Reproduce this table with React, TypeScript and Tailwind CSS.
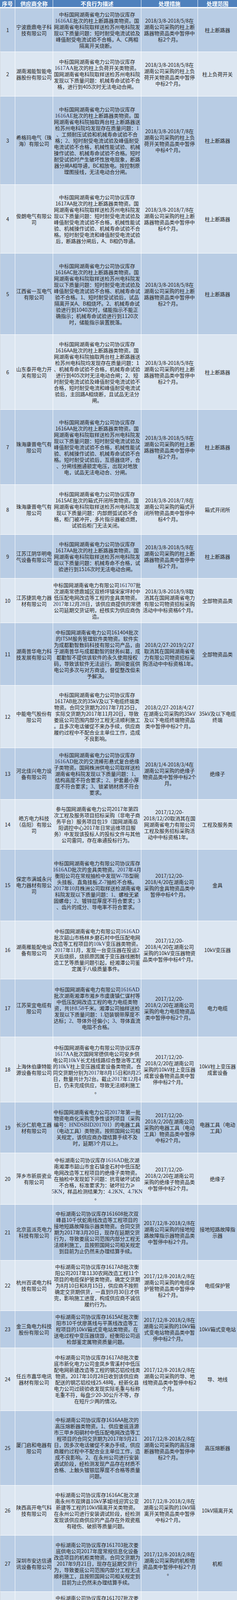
type Row = {
  h: number;
  name: string[];
  desc: string[];
  measure: string[];
  scope: string[];
};

// {...} marks a run set in the serif face, as in the source sheet
const rows: Row[] = [
  {
    h: 112,
    name: ["宁波鹿鼎电子科", "技有限公司"],
    desc: ["中标国网湖南省电力公司协议库存", "{1616AE}批次的柱上断路器类物资。国", "网湖南省电科院取样送检苏州电科院发", "现以下质量问题：短时耐受电流试验及", "峰值耐受电流试验不合格，A、C两相", "隔离开关烧断。"],
    measure: ["2018/3/8-2018/5/8在", "湖南公司采购的柱上断", "路器物资品类中暂停中", "标2个月。"],
    scope: ["柱上断路器"],
  },
  {
    h: 114,
    name: ["湖南湘能智能电", "器股份有限公司"],
    desc: ["中标国网湖南省电力公司协议库存", "{1617AA}批次的柱上负荷开关类物资。", "国网湖南省电科院取样送检苏州电科院", "发现以下质量问题：机械寿命试验不合", "格，进行到405次时无法电动合闸。"],
    measure: ["2018/3/8-2018/5/8在", "湖南公司采购的柱上负", "荷开关物资品类中暂停", "中标2个月。"],
    scope: ["柱上负荷开关"],
  },
  {
    h: 226,
    name: ["希格玛电气（珠", "海）有限公司"],
    desc: ["中标国网湖南省电力公司协议库存", "{1616AE}批次的柱上断路器类物资。国", "网湖南省电科院抽取两台柱上断路器送", "检苏州电科院均发现存在质量问题：{1}", "、工频耐压试验和机械寿命试验不合", "格；{2}、短时耐受电流试验及峰值耐受", "电流试验不合格，机械性能试验、机械", "操作试验、机械寿命试验不合格。短时", "耐受试验时产生破坏性放电现象，断路", "器分闸A相导通，BC相放电。按控制原", "理图接线，无法电动合分闸。"],
    measure: ["2018/3/8-2018/7/8在", "湖南公司采购的柱上负", "荷开关物资品类中暂停", "中标4个月。"],
    scope: ["柱上断路器"],
  },
  {
    h: 176,
    name: ["俊朗电气有限公", "司"],
    desc: ["中标国网湖南省电力公司协议库存", "1617AA批次的柱上断路器类物资。国", "网湖南省电科院取样送检苏州电科院发", "现以下质量问题：短时耐受电流试验及", "峰值耐受电流试验不合格，机械性能试", "验、机械操作试验、机械寿命试验不合", "格。短时耐受电流和峰值耐受电流试验", "后，断路器分闸后，A、B相仍导通。"],
    measure: ["2018/3/8-2018/7/8在", "湖南公司采购的柱上断", "路器物资品类中暂停中", "标4个月。"],
    scope: ["柱上断路器"],
  },
  {
    h: 208,
    name: ["江西省一互电气", "有限公司"],
    desc: ["中标国网湖南省电力公司协议库存", "1616AC批次的柱上断路器类物资。国", "网湖南省电科院取样送检苏州电科院发", "现以下质量问题：短时耐受电流试验及", "峰值耐受电流试验不合格、机械寿命试", "验不合格。1、短时耐受试验后，试品", "隔离开关A、B相烧坏。2、机械寿命试", "验进行到1040次时，储能指示不能正", "确指示；机械寿命试验进行到1120次", "时，储能指示装置脱落。"],
    measure: ["2018/3/8-2018/5/8在", "湖南公司采购的柱上断", "路器物资品类中暂停中", "标2个月。"],
    scope: ["柱上断路器"],
  },
  {
    h: 192,
    name: ["山东泰开电力开", "关有限公司"],
    desc: ["中标国网湖南省电力公司协议库存", "1616AA批次的柱上断路器类物资。国", "网湖南省电科院抽取两台柱上断路器送", "检苏州电科院均发现存在质量问题：1", "、机械寿命试验不合格，机械寿命试验", "进行到405次时无法电动合闸；2、短", "时耐受电流试验及峰值耐受电流试验不", "合格，短时耐受电流和峰值耐受电流试", "验后，主回路A相烧断，且试品无法分", "闸。"],
    measure: ["2018/3/8-2018/5/8在", "湖南公司采购的柱上断", "路器物资品类中暂停中", "标2个月。"],
    scope: ["柱上断路器"],
  },
  {
    h: 192,
    name: ["珠海康晋电气有", "限公司"],
    desc: ["中标国网湖南省电力公司协议库存", "1616AA批次的柱上断路器类物资。国", "网湖南省电科院取样送检苏州电科院发", "现以下质量问题：短时耐受电流试验及", "峰值耐受电流试验不合格，机械性能试", "验、机械操作试验、机械寿命试验不合", "格。短时耐受试验后，互感器烧坏，合", "、分闸线圈通额定电压，出现对地放", "电，试品无法电动合、分闸。"],
    measure: ["2018/3/8-2018/5/8在", "湖南公司采购的柱上断", "路器物资品类中暂停中", "标2个月。"],
    scope: ["柱上断路器"],
  },
  {
    h: 128,
    name: ["珠海康晋电气有", "限公司"],
    desc: ["中标国网湖南省电力公司协议库存", "1615AE批次的箱式开闭所类物资。国", "网湖南省电科院取样送检苏州电科院发", "现以下质量问题：内部燃弧试验不合", "格，柜门被冲开，多片指示器被点燃，", "试验后柜门无法关闭。"],
    measure: ["2018/3/8-2018/7/8在", "湖南公司采购的箱式开", "闭所物资品类中暂停中", "标4个月。"],
    scope: ["箱式开闭所"],
  },
  {
    h: 112,
    name: ["江苏江阴华明电", "气设备有限公司"],
    desc: ["中标国网湖南省电力公司协议库存", "1617AA批次的柱上断路器类物资。国", "网湖南省电科院取样送检苏州电科院发", "现以下质量问题：机械寿命不合格，试", "验进行到1516次时无法电动合闸。"],
    measure: ["2018/3/8-2018/5/8在", "湖南公司采购的柱上断", "路器物资品类中暂停中", "标2个月。"],
    scope: ["柱上断路器"],
  },
  {
    h: 114,
    name: ["江苏捷凯电力器", "材有限公司"],
    desc: ["中标国网湖南省电力有限公司{161707}批", "次湖南常德鼎城区双桥坪镇宋家坪村中", "低压配电网改造等工程的金具类物资。", "{2017}年{12}月{28}日，该供应商提供的常德", "公司延期交货证明，经核实为供应商伪", "造。"],
    measure: ["2018/3/8-2018/9/8取", "消其在国网湖南省电力", "有限公司物资招标采购", "活动中中标资格6个月。"],
    scope: ["全部物资品类"],
  },
  {
    h: 160,
    name: ["湖南普华电力科", "技发展有限公司"],
    desc: ["中标国网湖南省电力公司161404批次", "的ITSM服务管理软件类物资。软件实", "为成都勤智数码科技有限公司产品，由", "于湖南普华与成都勤智的财务纠葛，成", "都勤智不提供该软件的永久使用授权", "码，导致该软件无法运行。期间娄底供", "电公司多次与对方商谈，督促整改但未", "予解决。"],
    measure: ["2018/2/27-2019/2/27", "取消其在国网湖南省电", "力有限公司物资招标采", "购活动中中标资格1年。"],
    scope: ["全部物资品类"],
  },
  {
    h: 160,
    name: ["中能电气股份有", "限公司"],
    desc: ["中标国网湖南省电力公司协议库存", "1617AB批次的35kV及以下电缆终端类", "物资。合同交货期为2017年7月25日，", "实际交货期为2017年11月20日，导致", "娄底公司范围内部分工程无法顺利施工", "。且多次电话催促不来办手续，供应商", "履约过程中不配合业主单位工作，造成", "不良影响。"],
    measure: ["2018/2/27-2018/4/27", "在湖南公司采购的35kV", "及以下电缆终端物资品", "类中暂停中标2个月。"],
    scope: ["35kV及以下电缆", "终端"],
  },
  {
    h: 132,
    name: ["河北佳兴电力设", "备有限公司"],
    desc: ["中标国网湖南省电力公司协议库存", "{1616AD}批次的交流棒形悬式复合绝缘", "子类物资。国网株洲供电公司取样送检", "湖南省电科院发现以下质量问题：{1}、", "结构高度不符合要求；{2}、护套最小厚", "度不符合要求；{3}、锁紧销材质不符合", "要求。"],
    measure: ["2018/1/4-2018/3/4在", "湖南公司采购的绝缘子", "物资品类中暂停中标2个", "月。"],
    scope: ["绝缘子"],
  },
  {
    h: 128,
    name: ["皓方电力科技", "（岳阳）有限公", "司"],
    desc: ["参与国网湖南省电力公司2017年第四", "次工程及服务项目招标采购（非电子商", "务平台）服务项目包19（国网湖南岳", "阳调控中心2017年日常运维项目服", "务）中发现该投标人的投标文件与其他", "公司雷同，存在串通投标行为。"],
    measure: ["2017/12/20-", "2018/12/20取消其在国", "网湖南省电力有限公司", "工程及服务招标采购活", "动中中标资格1年。"],
    scope: ["工程及服务类"],
  },
  {
    h: 183,
    name: ["保定市满城永兴", "电力器材有限公", "司"],
    desc: ["中标国网湖南省电力有限公司协议库存", "{1616AD}批次的金具类物资。{2017}年{4}月", "衡阳公司在常规抽检中发现{W-7B}型碗", "头挂板、直角挂板{,Z-7}抽检不合格。", "{2017}年{10}月株洲公司取样送检湖南省电", "科院发现以下质量问题：{1}、螺栓无紧", "固螺母；{2}、镀锌层厚度不符合要求；{3}", "、齿片的成分、导电率不符合要求。"],
    measure: ["2017/12/20-", "2018/4/20在湖南公司", "采购的金具物资品类中", "暂停中标4个月。"],
    scope: ["金具"],
  },
  {
    h: 149,
    name: ["湖南雁能配电设", "备有限公司"],
    desc: ["中标国网湖南省电力有限公司{1616AD}", "批次韶山市杨林乡磨石村中低压配电网", "改造等工程项目的{10kV}变压器类物资。", "{2017}年{11}月，发现一台变压器在投运{2}", "天后烧损，烧损原因属于变压器线圈制", "造工艺等质量问题引起，经湘潭公司鉴", "定属于八级质量事件。"],
    measure: ["2017/12/20-", "2018/4/20在湖南公司", "采购的10kV变压器物资", "品类中暂停中标4个月。"],
    scope: ["10kV变压器"],
  },
  {
    h: 148,
    name: ["江苏荣宜电缆有", "限公司"],
    desc: ["中标国网湖南省电力有限公司{1616AD}", "批次湖南湘潭市湘乡市虞唐镇仁谋村等", "中低压配网改造工程的电力电缆类物", "资，共计{8.58}千米。湘潭公司抽样送检", "发现以下质量问题：{1.}铠装钢带厚度不", "达标；{2}、导体外径偏小；{3}、导体直流", "电阻不合格。"],
    measure: ["2017/12/20-", "2018/2/20在湖南公司", "采购的电力电缆物资品", "类中暂停中标2个月。"],
    scope: ["电力电缆"],
  },
  {
    h: 167,
    name: ["上海休伯康特能", "源设备有限公司"],
    desc: ["中标国网湖南省电力有限公司协议库存", "{1617AA}批次国网常德供电公司安乡供", "电公司{10kV}长尤线线路综合整治等工程", "的{10kV}柱上变压器成套设备类物资。合", "同交货期分别为{2017}年{8}月{15}日和{8}月{25}", "日，数量共计为{2}台。截止{2017}年{12}月{4}", "日，仍未完成供应，导致无法顺利施工", "。"],
    measure: ["2017/12/20-", "2018/2/20在湖南公司", "采购的10kV柱上变压器", "成套设备物资品类中暂", "停中标2个月。"],
    scope: ["10kV柱上变压器", "成套设备"],
  },
  {
    h: 130,
    name: ["长沙仁航电工器", "材有限公司"],
    desc: ["中标国网湖南省电力公司{2017}年第一批", "物资电商化采购竞争性谈判项目（采购", "编号：{HNDSBID201701}）的电器工具", "（电动工具）类物资。按照国网公司相", "关规定，该供应商办理结算手续不及", "时，延期{3}个月以上。"],
    measure: ["2017/12/20-", "2018/2/20在湖南公司", "采购的电器工具（电动", "工具）物资品类中暂停", "中标2个月。"],
    scope: ["电器工具（电动", "工具）"],
  },
  {
    h: 132,
    name: ["萍乡市新辰瓷业", "有限公司"],
    desc: ["中标湖南公司协议库存{1616AD}批次湖", "南湘潭市韶山市金石镇金石村中低压配", "电网改造等工程项目的绝缘子类物资。", "在抽检中发现如下问题：抗弯破坏试验", "不合格，标准要求为：破坏拉力≥", "{5KN}，样品检测结果为：{4.2KN}、{4.7KN}", "。"],
    measure: ["2017/12/20-", "2018/2/20在湖南公司", "采购的绝缘子物资品类", "中暂停中标2个月。"],
    scope: ["绝缘子"],
  },
  {
    h: 143,
    name: ["北京蓝派克电力", "科技有限公司"],
    desc: ["中标湖南公司协议库存161608批次双", "峰县10千伏蛇南线改造等工程项目的", "接地短路故障指示器类物资。合同交货", "期为2017年3月20日，现存在延期交货", "行为，导致娄底公司范围内部分工程无", "法顺利施工，且按照国网公司相关规定", "到目前为止仍然未办理结算手续。"],
    measure: ["2017/12/8-2018/2/8在", "湖南公司采购的接地短", "路故障指示器物资品类", "中暂停中标2个月。"],
    scope: ["接地短路故障指", "示器"],
  },
  {
    h: 129,
    name: ["杭州百诺电力科", "技有限公司"],
    desc: ["中标湖南公司协议库存1617AB批次衡", "阳公司2017年1130农网改造工程11个", "项目的电缆保护管类物资。确定交货期", "为8月10日和8月15日，供应商不按照", "确定交货期供货，一直到9月30日才供", "完，影响施工进度，构成供应商不诚信", "履约行为。"],
    measure: ["2017/12/8-2018/2/8在", "湖南公司采购的电缆保", "护管物资品类中暂停中", "标2个月。"],
    scope: ["电缆保护管"],
  },
  {
    h: 95,
    name: ["金三角电力科技", "股份有限公司"],
    desc: ["中标湖南公司协议库存1615AE批次衡", "阳市10千伏廖蒸线与平蒸线改造等工", "程项目的10kV箱式变电站类物资。在", "送电过程中变压器烧毁，经衡阳公司运", "检部鉴定属物资质量问题。"],
    measure: ["2017/12/8-2018/2/8在", "湖南公司采购的10kV箱", "式变电站物资品类中暂", "停中标2个月。"],
    scope: ["10kV箱式变电站"],
  },
  {
    h: 161,
    name: ["任丘市嘉华电讯", "器材有限公司"],
    desc: ["中标湖南公司协议库存1617AB批次娄", "底市新化电力公司金凤乡雪溪村中低压", "配电网新建改造等工程的钢芯铝绞线类", "物资。2017年10月28日收到该供应商", "配送的钢芯铝绞线25.48吨，经新化县", "电力公司过磅验收发现实际毛重与标称", "毛重不符，每盘少20-30公斤不等，存", "在短斤少两的情况。"],
    measure: ["2017/12/8-2018/2/8在", "湖南公司采购的导、地", "线物资品类中暂停中标2", "个月。"],
    scope: ["导、地线"],
  },
  {
    h: 191,
    name: ["厦门启和电器有", "限公司"],
    desc: ["中标湖南公司协议库存1616AA批次的", "高压熔断器类物资。1、供应娄底涟源", "市三甲乡阳硐村中低压配电网改造等工", "程项目的合同交货期为2017年9月21", "日，因多次电话催促不来办手续，供应", "商履约过程中不配合业主单位工作，造", "成不良影响。2、在永州公司进行安装", "调试阶段，经检测发现产品存在材质不", "合格、上触头镀银层厚度不合格等质量", "问题。"],
    measure: ["2017/12/8-2018/2/8在", "湖南公司采购的高压熔", "断器物资品类中暂停中", "标2个月。"],
    scope: ["高压熔断器"],
  },
  {
    h: 128,
    name: ["陕西高开电气科", "技有限公司"],
    desc: ["中标湖南公司协议库存1616AC批次湖", "南永州市双牌县10kV茅城I线迎宾公变", "新建等工程的10kV隔离开关类物资。", "在永州公司进行安装调试阶段，经检测", "发现该供应商供应的产品存在外观瓷瓶", "有碰伤、破损等质量问题。"],
    measure: ["2017/12/8-2018/2/8在", "湖南公司采购的10kV隔", "离开关物资品类中暂停", "中标2个月。"],
    scope: ["10kV隔离开关"],
  },
  {
    h: 144,
    name: ["深圳市安达信通", "讯设备有限公司"],
    desc: ["中标湖南公司协议库存161703批次娄", "底供电公司2017年度常规信息化设备", "改造项目的机柜类物资。合同交货期为", "2017年9月21日，现存在延期交货行", "为，导致娄底公司范围内部分工程无法", "顺利施工，且按照国网公司相关规定到", "目前为止仍然未办理结算手续。"],
    measure: ["2017/12/8-2018/2/8在", "湖南公司采购的机柜物", "资品类中暂停中标2个月", "。"],
    scope: ["机柜"],
  },
  {
    h: 112,
    name: ["邢台市华兴电器", "设备有限公司"],
    desc: ["中标湖南公司协议库存161707批次娄", "底供电公司新化县槎溪35kV输电工程", "的铁构件类物资。现出现焊接质量问", "题，铁构件镀锌质量不合格，影响结构", "强度，导致娄底公司范围内工程无法顺", "利施工。"],
    measure: ["2017/12/8-2018/2/8在", "湖南公司采购的铁附件", "物资品类中暂停中标2个", "月。"],
    scope: ["铁附件"],
  },
  {
    h: 176,
    name: ["银河电气科技有", "限公司"],
    desc: ["中标湖南公司协议库存1617AA批次的", "10kV配电变压器类物资。2017年10月", "衡阳公司对湖南衡阳市衡山县长江镇胜", "利村中低压配电网改造新建等工程配电", "变压器抽检，检测结果发现10kV配电", "变压器,ZA-1-CX,200kVA温升不合", "格，经衡阳公司物资质量检测中心鉴定", "属因供应商原因导致的物资质量问题。"],
    measure: ["2017/12/8-2018/2/8在", "湖南公司采购的10kV配", "电变压器物资品类中暂", "停中标2个月。"],
    scope: ["10kV配电变压器"],
  },
  {
    h: 240,
    name: ["河北光环电力器", "材有限公司"],
    desc: ["中标湖南公司协议库存161707批次的", "铁构件类物资。截止2017年11月3日已", "执行总额：54.46%，仍可配送数量", "（执行到80%）约220吨。国网衡阳物", "资供应中心按协议库存匹配要求，", "2017年11月17日组织实施匹配（共计", "匹配数量：144.723吨）。2017年11月", "18日至28日多次与该供应商协商电子", "商务平台确认事宜，但该供应商态度含", "糊，期间既不拒绝亦不确认，最后以环", "保原因拒绝确认，造成衡阳公司订单撤", "回，工期延误。"],
    measure: ["2017/12/8-2018/2/8在", "湖南公司采购的铁附件", "物资品类中暂停中标2个", "月。"],
    scope: ["铁附件"],
  },
  {
    h: 96,
    name: ["贵州星天电线电", "缆有限公司"],
    desc: ["中标湖南省1616AD批次的低压电力电", "缆、钢芯铝绞线、10kV电力电缆类物", "资。由于供应商内部改制，生产暂停，", "现供应商不确认协议库存供货单，导致", "合同解除。"],
    measure: ["2017/11/7-2018/5/7取", "消其在国网湖南省电力", "有限公司物资招标采购", "活动中中标资格6个月。"],
    scope: ["全部物资品类"],
  },
  {
    h: 160,
    name: ["河南昌泰电力设", "备有限公司"],
    desc: ["中标2017年娄底公司农网改造和集抄", "建设项目161707批次铁构件678.001", "吨，由于未按合同履约供货，娄底市物", "资供应中心组织人员进行驻厂催货一", "次，省公司组织约谈一次，仍未取得效", "果，导致娄底公司未供货订单全部取", "消，严重影响项目进度，构成供应商不", "诚信履约行为。"],
    measure: ["2017/10/18-", "2019/10/18取消其在国", "网湖南省电力有限公司", "物资招标采购活动中中", "标资格2年。"],
    scope: ["全部物资品类"],
  },
  {
    h: 160,
    name: ["冷水江天宝交通", "设施有限公司"],
    desc: ["中标2017年娄底公司农网改造和集抄", "建设项目161707批次铁构件660吨，由", "于未按合同履约供货，娄底市物资供应", "中心组织人员进行驻厂催货两次，省公", "司组织约谈一次，均未取得效果，导致", "娄底公司未供货订单全部取消，严重影", "响项目进度，构成供应商不诚信履约行", "为。"],
    measure: ["2017/10/18-", "2019/10/18取消其在国", "网湖南省电力有限公司", "物资招标采购活动中中", "标资格2年。"],
    scope: ["全部物资品类"],
  },
  {
    h: 64,
    name: ["厦门ABB电器控", "制设备有限公司"],
    desc: ["在专项抽检中发现10kV单相隔离开关", "的单相隔离开关触头镀银层厚度不合格", "。"],
    measure: ["2015/10/9-2015/12/8", "在湖南公司采购的10kV", "隔离开关物资品类中暂", "停中标2个月。"],
    scope: ["10kV隔离开关"],
  },
  {
    h: 268,
    name: ["江苏亚飞电缆有", "限公司"],
    desc: ["衡阳公司常宁县公司在罗桥供电所农网", "改造工程中发现由江苏亚飞供货的低压", "电力电缆存在质量问题，经抽检后发现", "YJLV4*120型电缆导体电阻实测值为", "0.276欧姆/千米，不满足国家标准导", "体电阻不大于0.253欧姆/千米的要求", "，电缆导体截面不足，影响电网安全运", "行。经衡阳公司物资质量检测中心鉴定", "，属于供应商原因导致的物资质量问题", "，该批次电缆已全部退货更换，造成工", "程进度延误，对农网改造工程建设造成", "不良影响。"],
    measure: ["2016/5/9-2016/9/9在", "湖南公司采购的低压电", "力电缆物资品类中暂停", "中标4个月。"],
    scope: ["低压电力电缆"],
  },
];

const headers = ["序号", "供应商全称", "不良行为描述", "处理措施", "处理范围"];

function Line({ text }: { text: string }) {
  const parts = text.split(/(\{[^}]+\})/).filter(Boolean);
  return (
    <div className="h-4 whitespace-nowrap leading-4">
      {parts.map((p, i) =>
        p.startsWith("{") ? (
          <span key={i} className="font-['Liberation_Serif',serif] text-[14px] leading-4 text-[#1f2a44]">
            {p.slice(1, -1)}
          </span>
        ) : (
          <span key={i}>{p}</span>
        )
      )}
    </div>
  );
}

function Cell({ lines, last }: { lines: string[]; last?: boolean }) {
  return (
    <div
      className={
        last
          ? "flex min-h-0 flex-col items-center justify-center text-center"
          : "flex min-h-0 flex-col items-center justify-center border-r border-white text-center"
      }
    >
      {lines.map((l, i) => (
        <Line key={i} text={l} />
      ))}
    </div>
  );
}

export default function App() {
  return (
    <div className="w-[607px] bg-white font-['Noto_Sans_CJK_SC',sans-serif] text-[13px] leading-4 text-[#1e1e1e]">
      <div className="grid h-[18px] grid-cols-[39px_97px_226px_145px_100px] bg-[#4f81bd] text-[14px] font-bold leading-[18px] text-white">
        {headers.map((h, i) => (
          <div
            key={h}
            className={i < 4 ? "flex items-center justify-center border-r border-white" : "flex items-center justify-center"}
          >
            {h}
          </div>
        ))}
      </div>
      <div className="h-[3px] bg-white" />
      {rows.map((r, i) => (
        <div
          key={i}
          style={{ height: r.h }}
          className={
            i % 2 === 0
              ? "grid grid-cols-[38px_97px_226px_145px_100px] grid-rows-1 border-b border-l border-b-white border-l-[#d0d4da] bg-[#b8cce4]"
              : "grid grid-cols-[38px_97px_226px_145px_100px] grid-rows-1 border-b border-l border-b-white border-l-[#d0d4da] bg-[#dce6f1]"
          }
        >
          <Cell lines={[String(i + 1)]} />
          <Cell lines={r.name} />
          <Cell lines={r.desc} />
          <Cell lines={r.measure} />
          <Cell lines={r.scope} last />
        </div>
      ))}
    </div>
  );
}
